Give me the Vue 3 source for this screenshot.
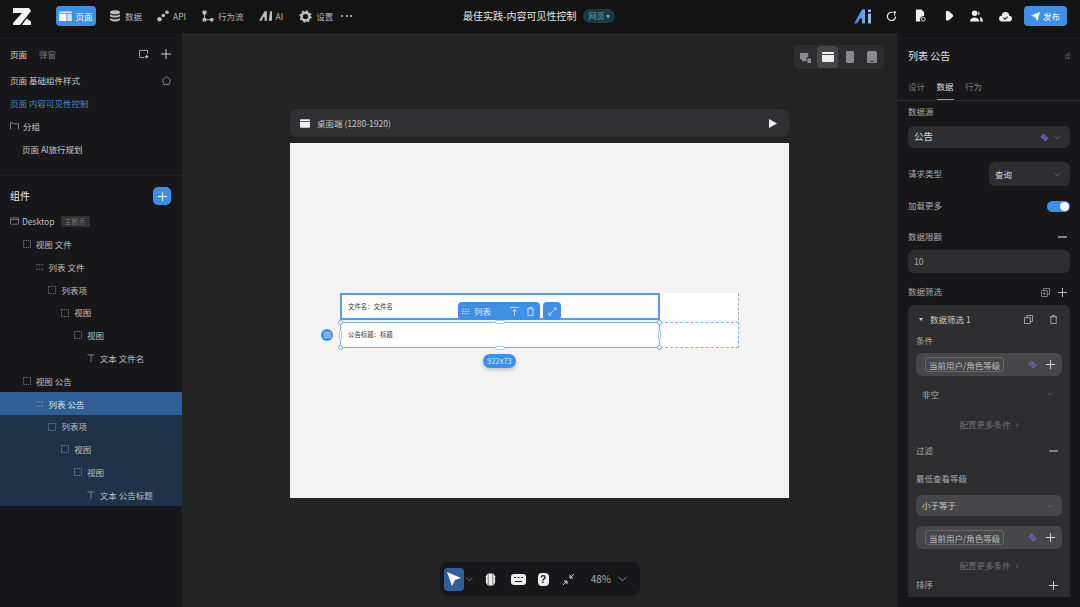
<script setup>
const navItems = [
  { label: '数据', icon: 'db', gap: 13 },
  { label: 'API', icon: 'api', gap: 15 },
  { label: '行为流', icon: 'flow', gap: 16 },
  { label: 'AI', icon: 'ai', gap: 15 },
  { label: '设置', icon: 'gear', gap: 16 }
]

const pages = [
  { label: '页面 基础组件样式', home: true },
  { label: '页面 内容可见性控制', active: true },
  { label: '分组', folder: true },
  { label: '页面 AI旅行规划', child: true }
]

const tree = [
  { label: '视图 文件', depth: 1, icon: 'box' },
  { label: '列表 文件', depth: 2, icon: 'list' },
  { label: '列表项', depth: 3, icon: 'box' },
  { label: '视图', depth: 4, icon: 'box' },
  { label: '视图', depth: 5, icon: 'box' },
  { label: '文本 文件名', depth: 6, icon: 'text' },
  { label: '视图 公告', depth: 1, icon: 'box' },
  { label: '列表 公告', depth: 2, icon: 'list', state: 'selected' },
  { label: '列表项', depth: 3, icon: 'box', state: 'inside' },
  { label: '视图', depth: 4, icon: 'box', state: 'inside' },
  { label: '视图', depth: 5, icon: 'box', state: 'inside' },
  { label: '文本 公告标题', depth: 6, icon: 'text', state: 'inside' }
]
</script>

<template>
  <div class="app">
    <header class="topbar">
      <svg class="logo" viewBox="0 0 18 17" width="18" height="17">
        <path d="M0 0h16l2 3L7 17H0v-2L9 5H0z" fill="#f2f2f2" />
        <path d="M13.500 10.500L18 13.500V17H9z" fill="#f2f2f2" />
      </svg>
      <div class="nav-active">
        <svg viewBox="0 0 14 12" width="13" height="11">
          <path d="M0 3h8v8H1a1 1 0 0 1-1-1zM0 1.500a1 1 0 0 1 1-1h12a1 1 0 0 1 1 1V2H0z" fill="#fff" />
          <rect x="9" y="3" width="5" height="8" rx="1" fill="#d5e6fa" />
        </svg>
        <span>页面</span>
      </div>
      <div v-for="item in navItems" :key="item.label" class="nav-item" :style="{ marginLeft: item.gap + 'px' }">
        <svg v-if="item.icon === 'db'" viewBox="0 0 12 12" width="12" height="12" fill="#bbb">
          <ellipse cx="6" cy="2.200" rx="5" ry="2" />
          <path d="M1 4.200c1.500 1.800 8.500 1.800 10 0v2c-1.500 1.800-8.500 1.800-10 0zM1 8c1.500 1.800 8.500 1.800 10 0v1.800c-1.500 2.400-8.500 2.400-10 0z" />
        </svg>
        <svg v-else-if="item.icon === 'api'" viewBox="0 0 12 12" width="12" height="12" fill="#bbb">
          <circle cx="2.500" cy="9.300" r="2.300" />
          <circle cx="6.300" cy="5.500" r="1.800" />
          <circle cx="10" cy="2.200" r="1.800" />
        </svg>
        <svg v-else-if="item.icon === 'flow'" viewBox="0 0 12 12" width="12" height="12" fill="#bbb">
          <rect x="0.500" y="0.500" width="4" height="4" rx="1" />
          <rect x="0.500" y="8" width="4" height="3.500" rx="1" />
          <rect x="8" y="8" width="3.500" height="3.500" rx="1" />
          <path d="M2 4h1v4H2zM4.500 9.300H8v1H4.500z" />
        </svg>
        <svg v-else-if="item.icon === 'ai'" viewBox="0 0 14 10" width="13" height="10" fill="#bbb">
          <path d="M0 10L6 0h2.500v10H6V6H4.500L3 10zM12 0h2v10h-3.500z" />
        </svg>
        <svg v-else viewBox="0 0 12 12" width="13" height="13">
          <circle cx="6" cy="6" r="3.600" fill="none" stroke="#bbb" stroke-width="2.400" />
          <circle cx="6" cy="6" r="5" fill="none" stroke="#bbb" stroke-width="1.500" stroke-dasharray="1.800 2.120" />
        </svg>
        <span>{{ item.label }}</span>
      </div>
      <div class="dots"><i></i><i></i><i></i></div>
      <div class="title">
        <span>最佳实践-内容可见性控制</span>
        <span class="badge">网页 ▾</span>
      </div>
      <div class="actions">
        <svg class="a-ai" viewBox="0 0 18 14" width="18" height="15">
          <defs>
            <linearGradient id="aiGrad" x1="0" y1="0" x2="1" y2="0">
              <stop offset="0" stop-color="#2f7fe0" />
              <stop offset="1" stop-color="#8fc3ee" />
            </linearGradient>
          </defs>
          <path d="M0 14L8 0h3v14H8V9H6l-3 5zM14 4h3v10h-3zM14 0h3v2.500h-3z" fill="url(#aiGrad)" />
        </svg>
        <svg viewBox="0 0 12 12" width="11" height="13">
          <path d="M7 1.500A4.500 4.500 0 1 0 10.500 6" fill="none" stroke="#eee" stroke-width="1.300" />
          <path d="M9.500 0v5M8 1.500h3" stroke="#eee" stroke-width="1.100" />
        </svg>
        <svg class="a-file" viewBox="0 0 12 14" width="11" height="14">
          <path d="M1 0h6l3 3v4a4 4 0 0 0-4 6H1z" fill="#eee" />
          <circle cx="9" cy="10.500" r="2" fill="none" stroke="#eee" stroke-width="1" />
        </svg>
        <svg viewBox="0 0 10 12" width="9" height="12"><path d="M1 1.500q0-1 1-1h2l5 4.500v1.500l-5 4.500H2q-1 0-1-1z" fill="#eee" /></svg>
        <svg viewBox="0 0 14 12" width="13" height="12" fill="#eee">
          <circle cx="5" cy="3" r="3" />
          <path d="M0 12c0-6 10-6 10 0zM9 1a2.500 2.500 0 0 1 0 4.500zM11 7c2 .5 3 2.500 3 5h-3z" />
        </svg>
        <svg viewBox="0 0 14 11" width="13" height="11">
          <path d="M3.500 11a3.200 3.200 0 0 1-.5-6.400 4 4 0 0 1 8 0 3.200 3.200 0 0 1-.5 6.400z" fill="#eee" />
          <path d="M4.800 6.800l1.700 1.700 2.800-2.800" fill="none" stroke="#141415" stroke-width="1.200" />
        </svg>
        <button class="publish">
          <svg viewBox="0 0 10 10" width="9" height="9"><path d="M0 4L10 0 7 10 5 6z" fill="#fff" /></svg>
          发布
        </button>
      </div>
    </header>

    <div class="main">
      <aside class="left">
        <section class="pages">
          <div class="tabs-row">
            <span class="on">页面</span>
            <span class="off">弹窗</span>
            <svg class="push" viewBox="0 0 11 11" width="10" height="10">
              <path d="M6 9.500H1.500a1 1 0 0 1-1-1v-7h9V5" fill="none" stroke="#bbb" stroke-width="1" />
              <path d="M8.500 6.500v4M6.500 8.500h4" stroke="#ddd" stroke-width="1" />
            </svg>
            <svg viewBox="0 0 10 10" width="10" height="10"><path d="M5 0v10M0 5h10" stroke="#ccc" stroke-width="1" /></svg>
          </div>
          <div v-for="page in pages" :key="page.label" class="page" :class="{ active: page.active, child: page.child }">
            <svg v-if="page.folder" viewBox="0 0 10 9" width="9" height="8">
              <path d="M.5 8V1h3l1 1h5v6" fill="none" stroke="#aaa" stroke-width=".8" />
            </svg>
            <span>{{ page.label }}</span>
            <svg v-if="page.home" class="push" viewBox="0 0 10 10" width="9" height="9">
              <path d="M5 .7L9.300 4 8 9.300H2L.7 4z" fill="none" stroke="#aaa" stroke-width=".8" />
            </svg>
          </div>
        </section>

        <section class="components">
          <div class="comp-head">
            <span>组件</span>
            <div class="comp-add">
              <svg viewBox="0 0 10 10" width="9" height="9"><path d="M5 0v10M0 5h10" stroke="#fff" stroke-width="1" /></svg>
            </div>
          </div>
          <div class="tree">
            <div class="row root">
              <svg viewBox="0 0 10 8" width="9" height="8">
                <rect x=".5" y=".5" width="9" height="7" rx="1" fill="none" stroke="#999" stroke-width=".8" />
                <path d="M.5 2.500h9" stroke="#999" stroke-width=".8" />
              </svg>
              <span>Desktop</span>
              <em>主断点</em>
            </div>
            <div
              v-for="(node, i) in tree"
              :key="i"
              class="row"
              :class="node.state"
              :style="{ paddingLeft: (10 + node.depth * 12.800) + 'px' }"
            >
              <svg v-if="node.icon === 'box'" viewBox="0 0 9 9" width="8" height="8">
                <rect x=".5" y=".5" width="8" height="8" fill="none" stroke="#999" stroke-width=".8" stroke-dasharray="1.500 1" />
              </svg>
              <svg v-else-if="node.icon === 'list'" viewBox="0 0 9 9" width="8" height="8">
                <path d="M0 2h9M0 7h9" fill="none" stroke="#999" stroke-width=".8" stroke-dasharray="2 1" />
              </svg>
              <svg v-else viewBox="0 0 9 9" width="8" height="8">
                <path d="M.5 1h8M4.500 1v8" fill="none" stroke="#999" stroke-width=".8" />
              </svg>
              <span>{{ node.label }}</span>
            </div>
          </div>
        </section>
      </aside>

      <div class="canvas">
        <div class="devices">
          <span class="device">
            <svg viewBox="0 0 12 12" width="11" height="11"><path d="M0 1h9v5H7v4H2V8H0zM8 7h4v5H8z" fill="#8a8a8c" /></svg>
          </span>
          <span class="device current">
            <svg viewBox="0 0 12 10" width="12" height="10">
              <path d="M0 3h12v6a1 1 0 0 1-1 1H1a1 1 0 0 1-1-1zM1 0h10a1 1 0 0 1 1 1v1H0V1a1 1 0 0 1 1-1z" fill="#eee" />
            </svg>
          </span>
          <span class="device">
            <svg viewBox="0 0 8 12" width="8" height="12"><rect width="8" height="12" rx="1.500" fill="#8a8a8c" /></svg>
          </span>
          <span class="device">
            <svg viewBox="0 0 10 12" width="10" height="12">
              <rect width="10" height="12" rx="1.500" fill="#8a8a8c" />
              <path d="M3 10.500h4" stroke="#2e2e30" stroke-width=".8" />
            </svg>
          </span>
        </div>

        <div class="stage">
          <div class="viewport-bar">
            <svg viewBox="0 0 12 10" width="10" height="9">
              <path d="M0 3h12v6a1 1 0 0 1-1 1H1a1 1 0 0 1-1-1zM1 0h10a1 1 0 0 1 1 1v1H0V1a1 1 0 0 1 1-1z" fill="#eee" />
            </svg>
            <span>桌面端 (1280-1920)</span>
            <svg class="push" viewBox="0 0 9 10" width="8" height="9"><path d="M0 0l9 5-9 5z" fill="#eee" /></svg>
          </div>

          <div class="artboard">
            <div class="list-row first">
              <div class="cell">文件名：文件名</div>
              <div class="ghost top"></div>
            </div>
            <div class="list-row second">
              <div class="cell">公告标题：标题</div>
              <div class="ghost"></div>
              <span class="handle tl"></span>
              <span class="handle tr"></span>
              <span class="handle bl"></span>
              <span class="handle br"></span>
              <span class="bar bar-top"></span>
              <span class="bar bar-bottom"></span>
              <span class="bar bar-left"></span>
              <span class="bar bar-right"></span>
              <span class="side-btn">
                <svg viewBox="0 0 8 6" width="7" height="6"><path d="M0 .5h8M0 3h8M0 5.500h8" stroke="#dcebfb" stroke-width="1" /></svg>
              </span>
              <div class="float-tools">
                <div class="tool-main">
                  <svg viewBox="0 0 9 7" width="8" height="7"><path d="M0 1h9M0 3.500h9M0 6h9" stroke="#dcebfb" stroke-width=".8" stroke-dasharray="2 1" /></svg>
                  <span>列表</span>
                  <svg class="push" viewBox="0 0 9 9" width="9" height="9"><path d="M0 .5h9M4.500 2.500V9M2.500 4.500l2-2 2 2" fill="none" stroke="#dcebfb" stroke-width=".8" /></svg>
                  <svg viewBox="0 0 9 9" width="9" height="9"><path d="M1 2h7M3 2V.5h3V2M2 2v6.500h5V2" fill="none" stroke="#dcebfb" stroke-width=".8" /></svg>
                </div>
                <div class="tool-expand">
                  <svg viewBox="0 0 10 10" width="9" height="9"><path d="M1 9l8-8M6 1h3v3M1 6v3h3" fill="none" stroke="#dcebfb" stroke-width=".9" /></svg>
                </div>
              </div>
              <div class="size-pill">922x73</div>
            </div>
          </div>
        </div>

        <div class="toolbar">
          <span class="pointer">
            <svg viewBox="0 0 14 14" width="14" height="14"><path d="M0 0l14 6-6 2-3 6z" fill="#fff" /></svg>
          </span>
          <svg class="chev" viewBox="0 0 8 5" width="7" height="5"><path d="M.5.500L4 4 7.500.500" fill="none" stroke="#888" stroke-width=".9" /></svg>
          <svg class="t1" viewBox="0 0 12 13" width="11" height="13">
            <path d="M3 0h6l2 3v7l-2 3H3L1 10V3z" fill="#eee" />
            <path d="M3.500 0v13M8.500 0v13" stroke="#18181a" stroke-width=".6" />
          </svg>
          <svg class="t2" viewBox="0 0 15 11" width="15" height="11">
            <rect width="15" height="11" rx="3" fill="#eee" />
            <path d="M3 3.500h2M6.500 3.500h2M10 3.500h2M4 7.500h7" stroke="#18181a" stroke-width="1.100" />
          </svg>
          <span class="help">?</span>
          <svg class="t3" viewBox="0 0 13 13" width="13" height="13">
            <path d="M1 12l4-4M5 8H2M5 8v3M12 1L8 5M8 5h3M8 5V2" fill="none" stroke="#ddd" stroke-width="1" />
          </svg>
          <span class="zoom">48%</span>
          <svg viewBox="0 0 10 6" width="9" height="6"><path d="M.5.500L5 5 9.500.500" fill="none" stroke="#aaa" stroke-width=".9" /></svg>
        </div>
      </div>

      <aside class="right">
        <div class="right-head">
          <div class="right-title"><span>列表 公告</span><i>d</i></div>
          <div class="right-tabs">
            <span>设计</span>
            <span class="on">数据</span>
            <span>行为</span>
          </div>
        </div>

        <div class="props">
          <div class="label first-label">数据源</div>
          <div class="field source">
            <span>公告</span>
            <svg class="push" viewBox="0 0 10 10" width="9" height="9"><path d="M1 4l3-3 5 5-3 3z" fill="#5d56a0" stroke="#8f86d8" stroke-width=".9" stroke-dasharray="1.500 .8" /></svg>
            <svg viewBox="0 0 8 5" width="7" height="5"><path d="M.5.500L4 4 7.500.500" fill="none" stroke="#777" stroke-width=".8" /></svg>
          </div>

          <div class="line req">
            <span class="label">请求类型</span>
            <div class="field small-select">
              <span>查询</span>
              <svg class="push" viewBox="0 0 8 5" width="7" height="5"><path d="M.5.500L4 4 7.500.500" fill="none" stroke="#777" stroke-width=".8" /></svg>
            </div>
          </div>

          <div class="line more">
            <span class="label">加载更多</span>
            <span class="toggle"><i></i></span>
          </div>

          <div class="line limit">
            <span class="label">数据限额</span>
            <svg viewBox="0 0 9 2" width="9" height="2"><path d="M0 1h9" stroke="#ccc" stroke-width="1.200" /></svg>
          </div>
          <div class="field number">10</div>

          <div class="line filter-head">
            <span class="label">数据筛选</span>
            <svg class="push" viewBox="0 0 10 10" width="9" height="9"><path d="M3 3V.5h6.500V7H7M.5 3H7v6.500H.5zM3.700 4.800v3M2.200 6.300h3" fill="none" stroke="#aaa" stroke-width=".8" /></svg>
            <svg class="add" viewBox="0 0 10 10" width="9" height="9"><path d="M5 0v10M0 5h10" stroke="#ccc" stroke-width="1" /></svg>
          </div>

          <div class="card">
            <div class="line card-head">
              <span class="tri"></span>
              <span class="card-title">数据筛选 1</span>
              <svg class="push" viewBox="0 0 10 10" width="9" height="9"><path d="M3 3V.5h6.500V7H7M.5 3H7v6.500H.5z" fill="none" stroke="#ccc" stroke-width=".8" /></svg>
              <svg class="trash" viewBox="0 0 10 10" width="9" height="9"><path d="M1 2h8M3.500 2V.5h3V2M2 2v7.500h6V2" fill="none" stroke="#ccc" stroke-width=".8" /></svg>
            </div>
            <div class="label cond">条件</div>
            <div class="chip-field">
              <span class="chip">当前用户/角色等级</span>
              <svg class="push" viewBox="0 0 10 10" width="9" height="9"><path d="M1 4l3-3 5 5-3 3z" fill="#5d56a0" stroke="#8f86d8" stroke-width=".9" stroke-dasharray="1.500 .8" /></svg>
              <svg class="chip-add" viewBox="0 0 10 10" width="9" height="9"><path d="M5 0v10M0 5h10" stroke="#ddd" stroke-width="1" /></svg>
            </div>
            <div class="plain-select">
              <span>非空</span>
              <svg viewBox="0 0 8 5" width="6" height="4"><path d="M.5.500L4 4 7.500.500" fill="none" stroke="#777" stroke-width=".8" /></svg>
            </div>
            <div class="more-cond">配置更多条件<b>›</b></div>
            <div class="line filter-row">
              <span class="label">过滤</span>
              <svg viewBox="0 0 9 2" width="9" height="2"><path d="M0 1h9" stroke="#ccc" stroke-width="1.200" /></svg>
            </div>
            <div class="label level">最低查看等级</div>
            <div class="fill-select">
              <span>小于等于</span>
              <svg viewBox="0 0 8 5" width="6" height="4"><path d="M.5.500L4 4 7.500.500" fill="none" stroke="#777" stroke-width=".8" /></svg>
            </div>
            <div class="chip-field second">
              <span class="chip">当前用户/角色等级</span>
              <svg class="push" viewBox="0 0 10 10" width="9" height="9"><path d="M1 4l3-3 5 5-3 3z" fill="#5d56a0" stroke="#8f86d8" stroke-width=".9" stroke-dasharray="1.500 .8" /></svg>
              <svg class="chip-add" viewBox="0 0 10 10" width="9" height="9"><path d="M5 0v10M0 5h10" stroke="#ddd" stroke-width="1" /></svg>
            </div>
            <div class="more-cond low">配置更多条件<b>›</b></div>
            <div class="line sort">
              <span class="label">排序</span>
              <svg viewBox="0 0 10 10" width="9" height="9"><path d="M5 0v10M0 5h10" stroke="#ddd" stroke-width="1" /></svg>
            </div>
          </div>
        </div>
      </aside>
    </div>
  </div>
</template>

<style>
html, body {
  margin: 0;
  background: #18181a;
}
</style>

<style scoped>
.app {
  width: 1080px;
  height: 607px;
  overflow: hidden;
  display: flex;
  flex-direction: column;
  background: #18181a;
  color: #d8d8d8;
  font-family: "Noto Sans CJK SC", "Noto Sans", sans-serif;
  font-size: 8.500px;
  line-height: 1.2;
}
svg {
  flex: none;
  display: block;
}
.push {
  margin-left: auto;
}

.topbar {
  height: 33px;
  flex: none;
  display: flex;
  align-items: center;
  background: #141415;
  box-sizing: border-box;
  padding: 0 0 1px 13px;
  position: relative;
}
.logo {
  margin-right: 25px;
}
.nav-active {
  width: 40px;
  height: 20px;
  background: #3f8fe6;
  border-radius: 4px;
  display: flex;
  align-items: center;
  justify-content: center;
  gap: 3px;
  color: #fff;
}
.nav-item {
  display: flex;
  align-items: center;
  gap: 4px;
  color: #b4b4b6;
}
.dots {
  display: flex;
  gap: 2.500px;
  margin-left: 8px;
}
.dots i {
  width: 2px;
  height: 2px;
  border-radius: 50%;
  background: #ccc;
}
.title {
  position: absolute;
  left: 463px;
  top: 0;
  height: 32px;
  display: flex;
  align-items: center;
  gap: 7px;
  font-size: 10px;
  color: #e4e4e4;
}
.badge {
  background: #1c3844;
  color: #5fa4c4;
  font-size: 8px;
  height: 14px;
  line-height: 14px;
  width: 32px;
  text-align: center;
  border-radius: 7px;
}
.actions {
  margin-left: auto;
  display: flex;
  align-items: center;
  gap: 16px;
  padding-right: 13px;
}
.a-ai {
  margin-right: -2px;
}
.a-file {
  margin: 0 3px 0 2px;
}
.publish {
  width: 43px;
  height: 20px;
  margin-left: -4px;
  background: #3f8fe6;
  border: 0;
  border-radius: 4px;
  color: #fff;
  font: inherit;
  display: flex;
  align-items: center;
  justify-content: center;
  gap: 3px;
  padding: 0;
}

.main {
  flex: 1;
  min-height: 0;
  display: flex;
}

.left {
  width: 182px;
  flex: none;
  background: #18181a;
  display: flex;
  flex-direction: column;
}
.pages {
  height: 143px;
  flex: none;
  box-sizing: border-box;
  border-bottom: 1px solid #212123;
  padding: 13px 11px 0 10px;
}
.tabs-row {
  display: flex;
  align-items: center;
  gap: 12px;
  height: 16px;
  margin-bottom: 7px;
}
.tabs-row .on {
  color: #ddd;
}
.tabs-row .off {
  color: #777;
}
.page {
  height: 22.800px;
  display: flex;
  align-items: center;
  gap: 4px;
  color: #c8c8c8;
}
.page.active {
  color: #4b86c9;
}
.page.child {
  padding-left: 12px;
}
.components {
  flex: 1;
  min-height: 0;
}
.comp-head {
  height: 28px;
  margin-top: 6px;
  padding: 0 11px 0 10px;
  display: flex;
  align-items: center;
  justify-content: space-between;
  font-size: 10px;
  color: #e6e6e6;
}
.comp-add {
  width: 18px;
  height: 18px;
  border-radius: 5px;
  background: #3f8fe6;
  display: flex;
  align-items: center;
  justify-content: center;
}
.tree {
  display: flex;
  flex-direction: column;
}
.row {
  height: 22.800px;
  display: flex;
  align-items: center;
  gap: 5px;
  color: #bdbdbd;
}
.row.root {
  padding-left: 10px;
  gap: 3px;
}
.row.root em {
  font-style: normal;
  font-size: 7px;
  background: #333335;
  color: #777;
  padding: 1px 4px;
  border-radius: 2px;
  margin-left: 3px;
}
.row.selected {
  background: #2f5f96;
  color: #dce6f0;
}
.row.inside {
  background: #1f3249;
}

.canvas {
  flex: 1;
  min-width: 0;
  position: relative;
  background: #242425;
}
.devices {
  position: absolute;
  top: 12px;
  right: 13px;
  height: 24px;
  padding: 0 2px 0 1px;
  border-radius: 5px;
  background: #2e2e30;
  display: flex;
  align-items: center;
  gap: 1px;
}
.device {
  width: 21px;
  height: 22px;
  border-radius: 4px;
  display: flex;
  align-items: center;
  justify-content: center;
}
.device.current {
  background: #464648;
}
.stage {
  width: 499px;
  padding: 76px 0 0 108px;
}
.viewport-bar {
  height: 28px;
  box-sizing: border-box;
  padding: 0 12px 0 10px;
  margin-bottom: 6px;
  border-radius: 7px;
  background: #313133;
  display: flex;
  align-items: center;
  gap: 7px;
  color: #c4c4c4;
}
.artboard {
  height: 355px;
  box-sizing: border-box;
  padding: 150px 0 0 50px;
  background: #f3f3f3;
  color: #333;
}
.list-row {
  position: relative;
  width: 399px;
  display: flex;
  font-size: 6.400px;
}
.cell {
  width: 320px;
  flex: none;
  box-sizing: border-box;
  background: #fff;
  padding-left: 7px;
  display: flex;
  align-items: center;
}
.list-row.first {
  height: 27px;
}
.list-row.first .cell {
  border: 2px solid #5a9bdc;
  padding-left: 6px;
}
.list-row.second {
  height: 26px;
  margin-top: 2px;
}
.list-row.second .cell {
  border: 1px solid #7fb0e2;
}
.ghost {
  flex: 1;
  box-sizing: border-box;
  background: #fff;
  border: 1px dashed #88b5e2;
  border-left: 0;
}
.ghost.top {
  border-bottom: 0;
  border-top: 0;
  border-right-color: #aaa;
}
.handle {
  position: absolute;
  width: 5px;
  height: 5px;
  border-radius: 50%;
  background: #fff;
  border: 1px solid #6aa5e0;
  box-sizing: border-box;
}
.tl { left: -2px; top: -2px; }
.tr { left: 317px; top: -2px; }
.bl { left: -2px; bottom: -2px; }
.br { left: 317px; bottom: -2px; }
.bar {
  position: absolute;
  background: #fff;
  border: 1px solid #a9cbec;
  box-sizing: border-box;
  border-radius: 2px;
}
.bar-top, .bar-bottom {
  left: 155px;
  width: 10px;
  height: 4px;
}
.bar-top { top: -2px; }
.bar-bottom { bottom: -2px; }
.bar-left, .bar-right {
  top: 8px;
  width: 3px;
  height: 10px;
}
.bar-left { left: -1px; }
.bar-right { left: 318px; }
.side-btn {
  position: absolute;
  left: -19px;
  top: 7px;
  width: 12px;
  height: 12px;
  border-radius: 50%;
  background: #3f8fe6;
  display: flex;
  align-items: center;
  justify-content: center;
}
.float-tools {
  position: absolute;
  left: 118px;
  top: -20px;
  display: flex;
  gap: 3px;
  color: #dcebfb;
  font-size: 8.500px;
}
.tool-main {
  width: 82px;
  height: 18px;
  box-sizing: border-box;
  padding: 0 5px 0 4px;
  background: #3f8fe6;
  border-radius: 4px;
  display: flex;
  align-items: center;
  gap: 4px;
}
.tool-main .push {
  margin-right: 3px;
}
.tool-expand {
  width: 18px;
  height: 18px;
  background: #3f8fe6;
  border-radius: 4px;
  display: flex;
  align-items: center;
  justify-content: center;
}
.size-pill {
  position: absolute;
  left: 143px;
  top: 32px;
  width: 33px;
  height: 14px;
  line-height: 14px;
  text-align: center;
  border-radius: 7px;
  background: #3f8fe6;
  color: #d5e6fa;
  font-size: 7.500px;
  box-shadow: 0 2px 4px rgba(0, 0, 0, .2);
}

.toolbar {
  position: absolute;
  left: 258px;
  bottom: 11px;
  width: 200px;
  height: 34px;
  box-sizing: border-box;
  padding: 0 13px 0 4px;
  border-radius: 8px;
  background: #18181a;
  display: flex;
  align-items: center;
}
.pointer {
  width: 23px;
  height: 23px;
  background: #2f5f96;
  border-radius: 4px;
  display: flex;
  align-items: center;
  justify-content: center;
}
.chev { margin-left: 2px; }
.t1 { margin-left: 12px; }
.t2 { margin-left: 15px; }
.help {
  width: 13px;
  height: 13px;
  margin-left: 12px;
  border-radius: 4px;
  background: #eee;
  color: #18181a;
  font: 700 10px/13px "Liberation Sans", sans-serif;
  text-align: center;
}
.t3 { margin-left: 13px; }
.zoom {
  margin-left: 16px;
  margin-right: 7px;
  font-size: 10px;
  color: #aaa;
}

.right {
  width: 183px;
  flex: none;
  background: #18181a;
  overflow: hidden;
}
.right-head {
  height: 68px;
  box-sizing: border-box;
  padding: 15px 10px 0 11px;
  border-bottom: 1px solid #2a2a2c;
}
.right-title {
  display: flex;
  justify-content: space-between;
  align-items: center;
  font-size: 10px;
  color: #e0e0e0;
  height: 16px;
}
.right-title i {
  font-style: normal;
  font-size: 8px;
  color: #666;
}
.right-tabs {
  display: flex;
  gap: 11.500px;
  margin-top: 17px;
  color: #777;
}
.right-tabs span {
  height: 19px;
  box-sizing: border-box;
}
.right-tabs .on {
  color: #ddd;
  border-bottom: 1px solid #999;
}
.props {
  padding: 4px 10px 0 11px;
}
.label {
  color: #a8a8aa;
}
.line {
  display: flex;
  align-items: center;
  justify-content: space-between;
}
.line .label {
  margin-bottom: 2px;
}
.first-label {
  height: 14px;
  line-height: 12px;
}
.field {
  background: #2e2e30;
  border-radius: 6px;
  display: flex;
  align-items: center;
  box-sizing: border-box;
}
.source {
  height: 22px;
  margin-top: 7px;
  padding: 0 9px 0 6px;
  font-size: 9.500px;
  gap: 5px;
}
.req {
  height: 24px;
  margin-top: 14px;
}
.small-select {
  width: 81px;
  height: 24px;
  padding: 0 9px 0 6px;
}
.more {
  height: 12px;
  margin-top: 14px;
}
.toggle {
  width: 23px;
  height: 11px;
  border-radius: 6px;
  background: #3f8fe6;
  position: relative;
}
.toggle i {
  position: absolute;
  right: 1px;
  top: 1px;
  width: 9px;
  height: 9px;
  border-radius: 50%;
  background: #fff;
}
.limit {
  height: 14px;
  margin-top: 18px;
  padding-right: 3px;
}
.number {
  height: 23px;
  margin-top: 6px;
  padding-left: 6px;
  color: #aaa;
}
.filter-head {
  height: 14px;
  margin-top: 12px;
  padding-right: 3px;
  gap: 8px;
}
.card {
  width: 162px;
  height: 292px;
  margin-top: 6px;
  box-sizing: border-box;
  padding: 6px 8px 0;
  border-radius: 6px 6px 0 0;
  background: #2e2e30;
  overflow: hidden;
}
.card-head {
  height: 16px;
  gap: 7px;
  padding: 0 4px 0 3px;
}
.tri {
  width: 0;
  height: 0;
  border-left: 2.500px solid transparent;
  border-right: 2.500px solid transparent;
  border-top: 3.500px solid #ccc;
}
.card-title {
  color: #c8c8c8;
}
.card-head .trash {
  margin-left: 9px;
}
.cond {
  margin-top: 6px;
  height: 14px;
  line-height: 14px;
}
.chip-field {
  height: 23px;
  margin-top: 6px;
  padding: 0 7px 0 9px;
  border-radius: 6px;
  background: #47474a;
  display: flex;
  align-items: center;
}
.chip {
  height: 15px;
  line-height: 14px;
  box-sizing: border-box;
  padding: 0 3px;
  border: 1px solid #67676a;
  border-radius: 3px;
  color: #bcbcbc;
}
.chip-add {
  margin-left: 9px;
}
.plain-select {
  height: 24px;
  margin-top: 6px;
  padding: 0 9px 0 6px;
  display: flex;
  align-items: center;
  justify-content: space-between;
  color: #aaa;
}
.more-cond {
  height: 14px;
  margin-top: 11px;
  line-height: 14px;
  text-align: center;
  color: #6f6f71;
  font-size: 8.500px;
}
.more-cond b {
  font-weight: 400;
  margin-left: 5px;
  font-size: 10px;
}
.filter-row {
  height: 14px;
  margin-top: 13px;
  padding-right: 4px;
}
.level {
  height: 14px;
  line-height: 14px;
  margin-top: 13px;
}
.fill-select {
  height: 21px;
  margin-top: 10px;
  padding: 0 9px 0 6px;
  background: #47474a;
  border-radius: 6px;
  display: flex;
  align-items: center;
  justify-content: space-between;
  color: #c8c8c8;
}
.chip-field.second {
  margin-top: 10px;
}
.more-cond.low {
  margin-top: 9px;
}
.sort {
  height: 14px;
  margin-top: 6px;
  padding-right: 4px;
  color: #777;
}
</style>
